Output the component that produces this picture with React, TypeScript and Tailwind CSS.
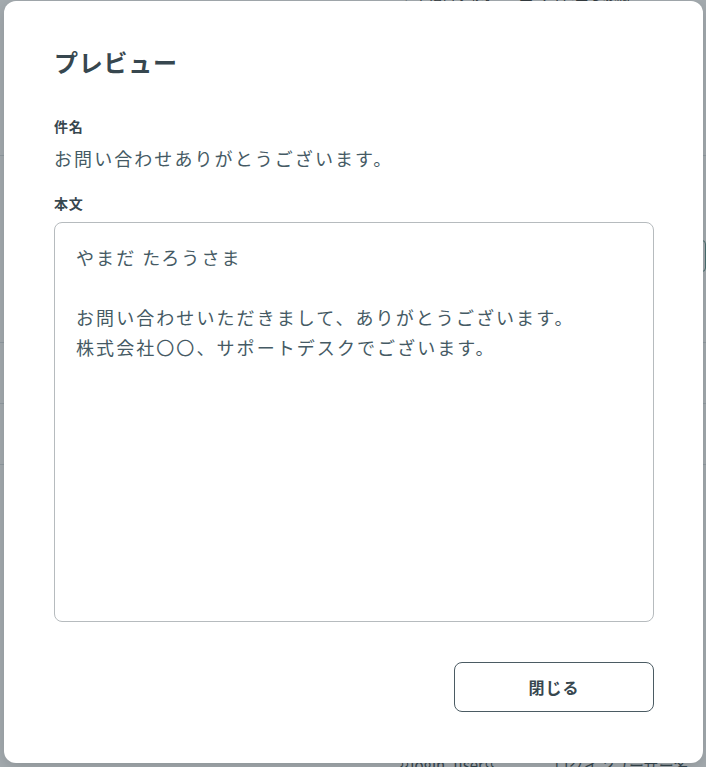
import React from "react";

const jp = "font-['Noto_Sans_CJK_JP','Noto_Sans',sans-serif]";

const PreviewModal = () => {
  const body = ["やまだ たろうさま", "", "お問い合わせいただきまして、ありがとうございます。", "株式会社〇〇、サポートデスクでございます。"];
  return (
    <div className="absolute inset-0 bg-[#37474f]/45 pl-[4px] pr-[3px] pt-[1px] pb-[4px]">
      <div className="flex h-full flex-col rounded-[12px] bg-white pl-[50px] pr-[49px] pt-[45px] shadow-[0_4px_16px_rgba(0,0,0,0.15)]">
        <h1 className="text-[24px] font-bold leading-[32px] tracking-[0.03em] text-[#37474f]">プレビュー</h1>
        <p className="mt-[38px] text-[14px] font-bold leading-[20px] tracking-[0.05em] text-[#37474f]">件名</p>
        <p className="mt-[8px] text-[18px] leading-[28px] tracking-[0.115em] text-[#455a64]">お問い合わせありがとうございます。</p>
        <p className="mt-[21px] text-[14px] font-bold leading-[20px] tracking-[0.05em] text-[#37474f]">本文</p>
        <div className="mt-[9px] h-[400px] w-[600px] rounded-[8px] border border-[#b6bbbe] px-[21px] py-[19px]">
          {body.map((line, i) => (
            <p key={i} className="h-[30px] text-[18px] leading-[30px] tracking-[0.115em] text-[#455a64]">{line}</p>
          ))}
        </div>
        <div className="mt-[40px] flex w-[600px] justify-end">
          <button className="h-[50px] w-[200px] rounded-[8px] border border-[#4b5b63] bg-white text-[16px] font-bold tracking-[0.06em] text-[#37474f]">閉じる</button>
        </div>
      </div>
    </div>
  );
};

export default function App() {
  return (
    <div className={`relative h-[767px] w-[706px] overflow-hidden bg-white ${jp}`}>
      <div className="flex h-full flex-col">
        <div className="-mt-[10px] flex gap-6 pl-[400px] text-[14px] text-[#333]">
          <span>設定項目 • 署名</span>
          <span>テンプレート変数</span>
        </div>
        <div className="mt-[20px] pl-[690px] text-[14px] leading-[22px] text-[#333]">
          <p>タ</p>
          <p>ス</p>
        </div>
        <div className="mt-[80px] border-t border-[#dde2e5]" />
        <div className="mt-[84px] ml-[690px] h-[32px] rounded border border-[#5a8f89]" />
        <div className="mt-[70px] border-t border-[#dde2e5]" />
        <div className="mt-[60px] border-t border-[#dde2e5]" />
        <div className="mt-[60px] border-t border-[#dde2e5]" />
        <div className="mt-auto flex items-end gap-[60px] pl-[400px] text-[15px] leading-[20px] text-[#37474f] -mb-[8px]">
          <span>{"{{login_user}}"}</span>
          <span>ログインユーザー名</span>
        </div>
      </div>
      <PreviewModal />
    </div>
  );
}
